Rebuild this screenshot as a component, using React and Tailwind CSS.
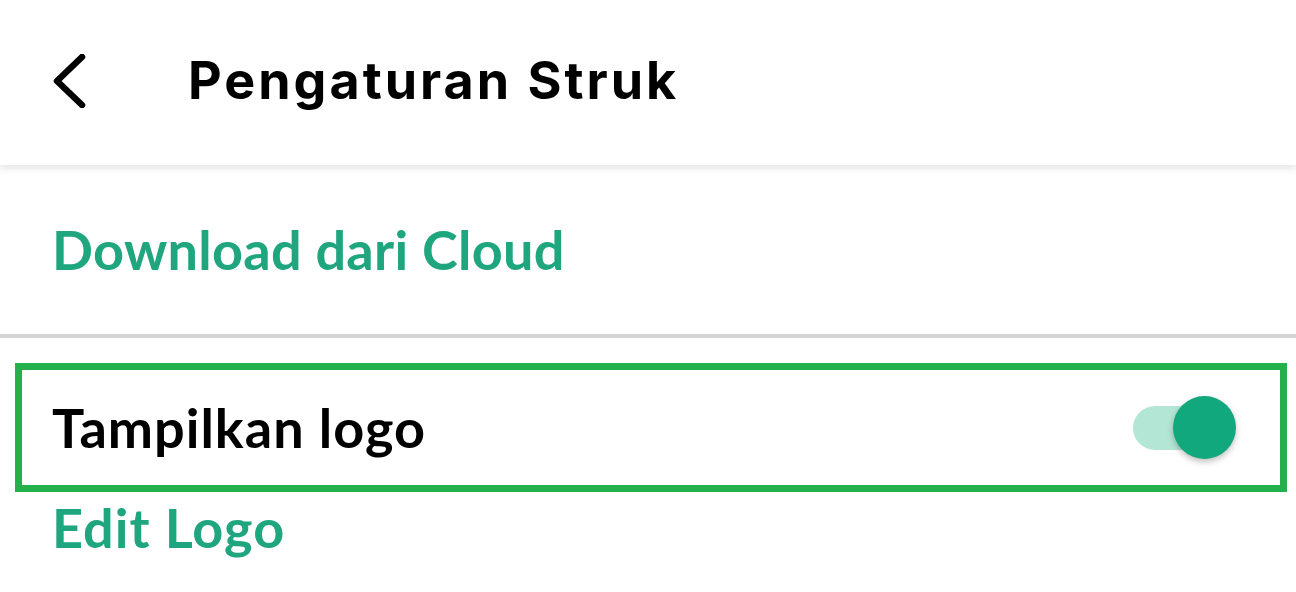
import { useState } from 'react'

const GREEN = 'text-[#1fa67f]'

export default function App() {
  const [showLogo, setShowLogo] = useState(true)

  return (
    <div className="w-[1296px] h-[592px] overflow-hidden bg-white font-['Lato',sans-serif]">
      {/* Top bar */}
      <div className="relative z-10 h-[165px] pb-[4px] bg-white flex items-center shadow-[0_3px_8px_rgba(0,0,0,0.12)]">
        <button className="ml-[50px] w-[40px] h-[60px] flex items-center justify-center">
          <svg width="36" height="54" viewBox="0 0 36 54" fill="none">
            <path d="M30 3 L5 27 L30 51" stroke="#000" strokeWidth="6.5" strokeLinecap="round" strokeLinejoin="round" />
          </svg>
        </button>
        <h1 className="ml-[98px] font-['Inter',sans-serif] text-[52px] font-bold text-black leading-none tracking-[3px]">Pengaturan Struk</h1>
      </div>

      {/* Download */}
      <div className="h-[169px] flex items-center px-[52px]">
        <a href="#" className={`text-[54px] font-bold leading-none tracking-[0.3px] ${GREEN}`}>Download dari Cloud</a>
      </div>
      <div className="h-[4px] bg-[#d4d4d4]" />

      {/* Show logo */}
      <div className="mt-[25px] ml-[15px] mr-[9px] h-[129px] border-[7px] border-[#23b14d] flex items-center justify-between pl-[30px] pr-[44px]">
        <span className="text-[54px] font-bold text-black leading-none tracking-[1px]">Tampilkan logo</span>
        <button
          onClick={() => setShowLogo(!showLogo)}
          className="relative w-[103px] h-[63px] flex items-center"
        >
          <span className={`w-[92px] h-[44px] rounded-full ${showLogo ? 'bg-[#b4e6d5]' : 'bg-[#d0d0d0]'}`} />
          <span
            className={`absolute top-0 w-[63px] h-[63px] rounded-full shadow-[0_3px_6px_rgba(0,0,0,0.25)] ${showLogo ? 'left-[40px] bg-[#10a87c]' : 'left-0 bg-[#f1f1f1]'}`}
          />
        </button>
      </div>

      <div className="px-[52px] pt-[9px]">
        <a href="#" className={`text-[54px] font-bold leading-none tracking-[1px] ${GREEN}`}>Edit Logo</a>
      </div>
    </div>
  )
}
